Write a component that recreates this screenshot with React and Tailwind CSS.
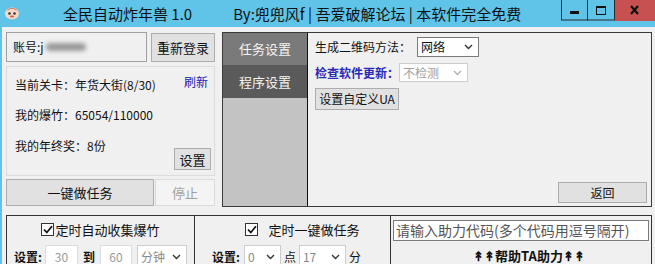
const font = { fontFamily: '"Noto Sans CJK SC", "Liberation Sans", sans-serif' };

function Btn({ className = '', children, disabled = false }) {
  return (
    <div
      className={`flex items-center justify-center bg-[#e1e1e1] border border-[#adadad] text-[12px] leading-none ${
        disabled ? 'text-[#a0a0a0] bg-[#f4f4f4] border-[#dadada]' : 'text-[#111]'
      } ${className}`}
    >
      {children}
    </div>
  );
}

function Select({ value, className = '', disabled = false }) {
  return (
    <div
      className={`flex items-center justify-between bg-white border px-[3px] text-[12px] leading-none ${
        disabled ? 'border-[#cccccc] text-[#a0a0a0]' : 'border-[#7a7a7a] text-[#111]'
      } ${className}`}
    >
      <span>{value}</span>
      <svg width="9" height="6" viewBox="0 0 9 6" className="mr-[2px]">
        <path d="M1 1 L4.5 4.5 L8 1" fill="none" stroke={disabled ? '#b0b0b0' : '#333'} strokeWidth="1.4" />
      </svg>
    </div>
  );
}

function Check() {
  return (
    <span className="inline-flex items-center justify-center w-[13px] h-[13px] border border-[#333] bg-white">
      <svg width="10" height="9" viewBox="0 0 10 9">
        <path d="M1 4.5 L3.8 7.5 L9 1.2" fill="none" stroke="#111" strokeWidth="1.8" />
      </svg>
    </span>
  );
}

function WindowButtons() {
  return (
    <svg width="94" height="21" viewBox="0 0 94 21" className="shrink-0">
      <rect x="0.5" y="-1" width="26" height="21" fill="none" stroke="#2a2a2a" />
      <rect x="9" y="11" width="9" height="3" fill="#111" />
      <rect x="26.5" y="-1" width="27" height="21" fill="none" stroke="#2a2a2a" />
      <rect x="35.5" y="6.5" width="9" height="8" fill="none" stroke="#111" />
      <rect x="35.5" y="6.5" width="9" height="1.5" fill="#111" />
      <rect x="54" y="0" width="40" height="21" fill="#c75050" />
      <path d="M70 6 L77 14 M77 6 L70 14" stroke="#111" strokeWidth="2.2" />
    </svg>
  );
}

function TitleBar() {
  return (
    <div className="h-[27px] shrink-0 bg-[#5fc4e8] flex items-start">
      <svg width="16" height="14" viewBox="0 0 16 14" className="ml-[4px] mt-[6px] shrink-0">
        <ellipse cx="8" cy="7.5" rx="7" ry="6" fill="#f3d7c7" />
        <path d="M2 5 Q8 -1 14 5 L12 4 Q8 1 4 4 Z" fill="#c0392b" />
        <circle cx="5.5" cy="7.5" r="1.3" fill="#333" />
        <circle cx="10.5" cy="7.5" r="1.3" fill="#333" />
        <ellipse cx="8" cy="10.5" rx="2" ry="1" fill="#d9534f" />
      </svg>
      <span className="ml-[43px] mt-[3px] text-[15px] text-[#111] whitespace-nowrap">全民自动炸年兽 1.0</span>
      <span className="ml-[41px] mt-[3px] text-[15px] text-[#111] whitespace-nowrap">By:兜兜风f | 吾爱破解论坛 | 本软件完全免费</span>
      <div className="ml-auto">
        <WindowButtons />
      </div>
    </div>
  );
}

function LeftColumn() {
  return (
    <div className="w-[209px] shrink-0 flex flex-col">
      <div className="flex items-start gap-[4px]">
        <div className="w-[141px] h-[30px] border border-[#a0a0a0] bg-[#f0f0f0] flex items-center pl-[6px] text-[12px] text-[#111]">
          账号:j
          <span className="inline-block w-[40px] h-[8px] bg-[#9a9a9a] blur-[2px] ml-[2px] rounded" />
        </div>
        <Btn className="w-[64px] h-[29px] mt-[1px] text-[13px]">重新登录</Btn>
      </div>
      <div className="mt-[4px] h-[110px] border border-[#dcdcdc] relative text-[12px] text-[#111] px-[8px] pt-[9px]">
        <div className="flex justify-between">
          <span>当前关卡：年货大街(8/30)</span>
          <span className="text-[#2020b0] mr-[-2px] -mt-[3px]">刷新</span>
        </div>
        <div className="mt-[12px]">我的爆竹：65054/110000</div>
        <div className="mt-[13px]">我的年终奖：8份</div>
        <Btn className="absolute right-[3px] bottom-[5px] w-[37px] h-[22px] text-[13px]">设置</Btn>
      </div>
      <div className="mt-[3px] flex gap-[1px]">
        <Btn className="w-[148px] h-[27px] text-[13px]">一键做任务</Btn>
        <Btn disabled className="w-[60px] h-[27px] text-[13px]">停止</Btn>
      </div>
    </div>
  );
}

function TabPanel() {
  return (
    <div className="w-[430px] h-[175px] shrink-0 border border-[#3a3a3a] flex">
      <div className="w-[85px] bg-[#c3c3c3] border-r border-[#111] flex flex-col text-[13px] text-[#f4f4f4]">
        <div className="h-[32px] bg-[#7a7a7a] flex items-center justify-center">任务设置</div>
        <div className="h-[33px] bg-[#5a5a5a] flex items-center justify-center">程序设置</div>
      </div>
      <div className="flex-1 bg-[#f0f0f0] relative pl-[7px] pt-[4px] text-[12px] text-[#111]">
        <div className="flex items-center h-[20px]">
          <span className="w-[102px]">生成二维码方法：</span>
          <Select value="网络" className="w-[62px] h-[20px]" />
        </div>
        <div className="flex items-center h-[19px] mt-[6px]">
          <span className="w-[84px] text-[#2a2ab5] font-bold">检查软件更新：</span>
          <Select disabled value="不检测" className="w-[69px] h-[19px]" />
        </div>
        <Btn className="w-[84px] h-[22px] mt-[6px] text-[12px]">设置自定义UA</Btn>
        <Btn className="absolute right-[4px] bottom-[3px] w-[89px] h-[21px] text-[12px]">返回</Btn>
      </div>
    </div>
  );
}

function Input({ value, className = '' }) {
  return (
    <div className={`bg-white border border-[#dcdcdc] text-[#999] text-[12px] flex items-center justify-center leading-none ${className}`}>
      {value}
    </div>
  );
}

function BottomGroups() {
  return (
    <div className="flex h-[49px] text-[12px] text-[#111]">
      <div className="w-[189px] border border-[#333] border-b-0 flex flex-col items-center">
        <div className="flex items-center gap-[1px] mt-[6px] h-[15px] text-[13px]">
          <Check />
          定时自动收集爆竹
        </div>
        <div className="flex items-center self-start pl-[7px] mt-[8px] gap-[1px]">
          <span className="font-bold mr-[2px]">设置:</span>
          <Input value="30" className="w-[33px] h-[24px]" />
          <span className="mx-[4px] font-bold">到</span>
          <Input value="60" className="w-[32px] h-[24px]" />
          <Select value="分钟" className="w-[50px] h-[24px] ml-[4px] border-[#cccccc] text-[#888]" />
        </div>
      </div>
      <div className="w-[196px] border-t border-r border-[#333] flex flex-col items-center">
        <div className="flex items-center gap-[10px] mt-[6px] h-[15px] text-[13px] ml-[20px]">
          <Check />
          定时一键做任务
        </div>
        <div className="flex items-center self-start pl-[17px] mt-[8px]">
          <span className="font-bold mr-[4px]">设置:</span>
          <Select value="0" className="w-[37px] h-[24px] border-[#cccccc] text-[#888]" />
          <span className="mx-[3px]">点</span>
          <Select value="17" className="w-[47px] h-[24px] border-[#cccccc] text-[#888] mr-[3px]" />
          <span>分</span>
        </div>
      </div>
      <div className="w-[261px] border-t border-r border-[#333] flex flex-col pl-[2px] pr-[2px]">
        <div className="mt-[4px] h-[21px] border border-[#7a7a7a] bg-white flex items-center text-[14px] text-[#555] pl-[2px]">
          请输入助力代码(多个代码用逗号隔开)
        </div>
        <div className="text-center font-bold text-[13px] leading-[14px] mt-[8px] ml-[16px]">↟↟帮助TA助力↟↟</div>
      </div>
    </div>
  );
}

export default function App() {
  return (
    <div style={font} className="w-[655px] h-[264px] overflow-hidden bg-[#f0f0f0] flex flex-col">
      <TitleBar />
      <div className="flex-1 border-l-2 border-[#5fc4e8] pl-[4px]">
        <div className="flex pt-[5px] gap-[7px]">
          <LeftColumn />
          <TabPanel />
        </div>
        <div className="mt-[8px]">
          <BottomGroups />
        </div>
      </div>
    </div>
  );
}
